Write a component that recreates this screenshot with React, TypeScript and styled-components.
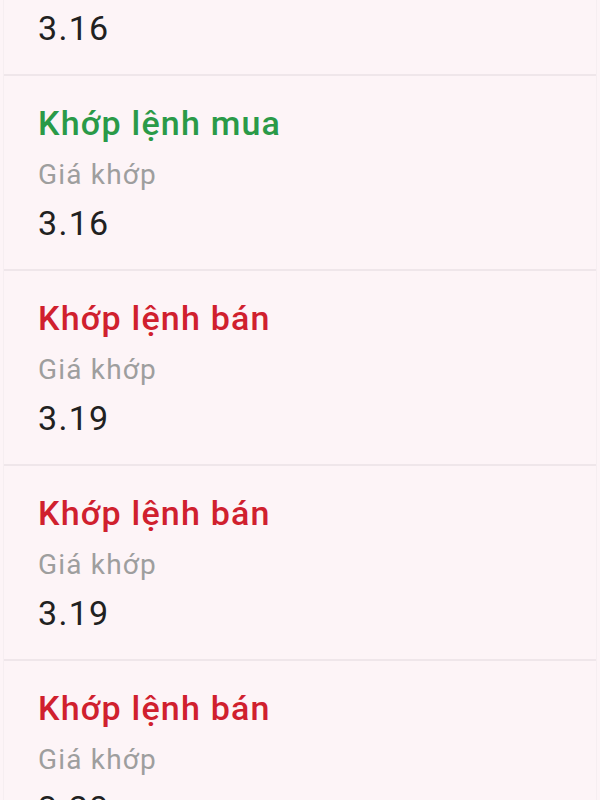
import React from "react";
import styled, { createGlobalStyle } from "styled-components";

const Global = createGlobalStyle`
  html, body {
    margin: 0;
    padding: 0;
    background: #fdf4f7;
    font-family: Roboto, "Noto Sans", Arial, sans-serif;
  }
  #root { height: 800px; overflow: hidden; }
`;

const Viewport = styled.div`
  height: 800px;
  overflow: hidden;
  background: #fdf4f7;
`;

const List = styled.ul`
  list-style: none;
  margin: -119px 3px 0;
  padding: 0;
  border-left: 1px solid #f6eef1;
  border-right: 1px solid #f6eef1;
`;

const Item = styled.li`
  padding: 27px 0 26px 34px;
  border-bottom: 2px solid #efe6ea;
  display: flex;
  flex-direction: column;
`;

const Title = styled.div<{ $side: "buy" | "sell" }>`
  font-size: 34px;
  line-height: 40px;
  font-weight: 500;
  letter-spacing: 1.2px;
  color: ${(p) => (p.$side === "buy" ? "#2a9a48" : "#d0202e")};
`;

const Label = styled.div`
  margin-top: 15px;
  font-size: 28px;
  line-height: 34px;
  letter-spacing: 1.2px;
  color: #9e9e9e;
`;

const Value = styled.div`
  margin-top: 11px;
  font-size: 34px;
  line-height: 40px;
  letter-spacing: 1.3px;
  color: #212121;
`;

type Trade = { side: "buy" | "sell"; price: string };

const trades: Trade[] = [
  { side: "buy", price: "3.16" },
  { side: "buy", price: "3.16" },
  { side: "sell", price: "3.19" },
  { side: "sell", price: "3.19" },
  { side: "sell", price: "3.20" },
];

export default function App() {
  return (
    <Viewport>
      <Global />
      <List>
        {trades.map((t, i) => (
          <Item key={i}>
            <Title $side={t.side}>
              {t.side === "buy" ? "Khớp lệnh mua" : "Khớp lệnh bán"}
            </Title>
            <Label>Giá khớp</Label>
            <Value>{t.price}</Value>
          </Item>
        ))}
      </List>
    </Viewport>
  );
}
